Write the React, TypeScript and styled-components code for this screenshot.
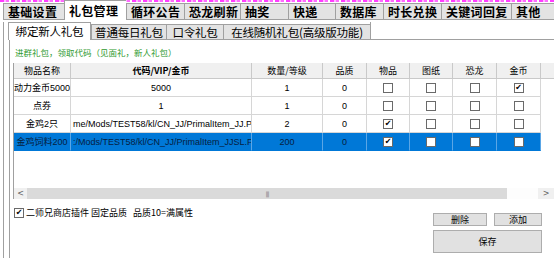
import React from 'react';
import styled, { createGlobalStyle } from 'styled-components';

const GlobalStyle = createGlobalStyle`
  html, body {
    margin: 0;
    padding: 0;
    background: #fff;
  }
  body {
    font-family: "Noto Sans CJK SC", "Microsoft YaHei", sans-serif;
    color: #000;
  }
`;

const Window = styled.div`
  width: 554px;
  height: 258px;
  overflow: hidden;
  background: #fff;
`;

const MainTabRow = styled.div`
  display: flex;
  align-items: flex-start;
  height: 20px;
  padding-left: 3px;
  background-image: repeating-linear-gradient(90deg, #ff3cff 0 4px, #ffb8ff 4px 6px, #ff6aff 6px 9px, #fff 9px 11px);
  background-size: 100% 2px;
  background-repeat: no-repeat;
`;

const MainTab = styled.div<{ $w: number; $active?: boolean }>`
  flex: none;
  box-sizing: border-box;
  width: ${p => p.$w}px;
  height: ${p => (p.$active ? 20 : 17)}px;
  margin-top: ${p => (p.$active ? 0 : 3)}px;
  padding-left: 4px;
  border: 1px solid #a0a0a0;
  border-right: none;
  border-bottom: ${p => (p.$active ? 'none' : '1px solid #a0a0a0')};
  background: ${p => (p.$active ? '#fff' : '#e3e3e3')};
  font-size: 12px;
  font-weight: 700;
  letter-spacing: 0.3px;
  line-height: ${p => (p.$active ? 19 : 15)}px;
  white-space: nowrap;
  overflow: hidden;
`;

const MainPanel = styled.div`
  height: 238px;
  margin-left: 3px;
  border-left: 1px solid #a0a0a0;
  padding-left: 5px;
`;

const SubTabRow = styled.div`
  display: flex;
  align-items: flex-start;
  height: 18px;
  margin-top: 2px;
  margin-left: -1px;
`;

const SubTab = styled.div<{ $w: number; $active?: boolean }>`
  flex: none;
  box-sizing: border-box;
  width: ${p => p.$w}px;
  height: ${p => (p.$active ? 18 : 16)}px;
  margin-top: ${p => (p.$active ? 0 : 2)}px;
  border: 1px solid #a0a0a0;
  border-right: ${p => (p.$active ? '1px solid #a0a0a0' : 'none')};
  border-bottom: ${p => (p.$active ? 'none' : '1px solid #a0a0a0')};
  background: ${p => (p.$active ? '#fff' : '#e3e3e3')};
  font-size: 11.5px;
  line-height: ${p => (p.$active ? 17 : 14)}px;
  text-align: center;
  white-space: nowrap;
  overflow: hidden;
  letter-spacing: -0.2px;
`;

const SubTabFill = styled.div`
  flex: 1;
  height: 18px;
  box-sizing: border-box;
  border-left: 1px solid #a0a0a0;
  border-bottom: 1px solid #a0a0a0;
`;

const SubPanel = styled.div`
  height: 218px;
  border-left: 1px solid #a0a0a0;
  padding-left: 4px;
  display: flex;
  flex-direction: column;
`;

const Hint = styled.div`
  margin: 7px 0 0 1px;
  height: 11px;
  font-size: 8.5px;
  line-height: 11px;
  color: #2f9a2f;
  white-space: nowrap;
`;

const Table = styled.div`
  margin-top: 5px;
  margin-left: -1px;
  border-left: 1px solid #a0a0a0;
  width: 560px;
`;

const GridBody = styled.div`
  height: 125px;
  background: #fff;
`;

const COLS = '57px 181px 71px 44px 43px 43px 44px 44px 1fr';

const HeaderRow = styled.div`
  display: grid;
  grid-template-columns: ${COLS};
  height: 16px;
  background: #f0f0f0;
`;

const HeaderCell = styled.div<{ $bold?: boolean }>`
  box-sizing: border-box;
  border-right: 1px solid #c9c9c9;
  border-bottom: 1px solid #c9c9c9;
  font-size: 9px;
  font-weight: ${p => (p.$bold ? 700 : 400)};
  line-height: 15px;
  text-align: center;
  white-space: nowrap;
  overflow: hidden;
`;

const Row = styled.div<{ $selected?: boolean }>`
  display: grid;
  grid-template-columns: ${COLS};
  height: 18px;
  color: ${p => (p.$selected ? '#06203f' : '#000')};
  & > div:not(:last-child) {
    background: ${p => (p.$selected ? '#0078d7' : '#fff')};
    border-right: 1px solid ${p => (p.$selected ? '#5aa6e6' : '#d6d6d6')};
    border-bottom: 1px solid ${p => (p.$selected ? '#0078d7' : '#d6d6d6')};
  }
`;

const Cell = styled.div<{ $left?: boolean }>`
  box-sizing: border-box;
  display: flex;
  align-items: center;
  justify-content: ${p => (p.$left ? 'flex-start' : 'center')};
  padding-left: ${p => (p.$left ? 2 : 0)}px;
  font-family: "Liberation Sans", "Noto Sans CJK SC", sans-serif;
  font-size: 9px;
  white-space: nowrap;
  overflow: hidden;
`;

const Filler = styled.div``;

const Box = styled.span<{ $checked?: boolean }>`
  box-sizing: border-box;
  flex: none;
  width: 10px;
  height: 10px;
  border: 1px solid #6a6a6a;
  background: #fff;
  display: flex;
  align-items: center;
  justify-content: center;
  font-family: "DejaVu Sans", sans-serif;
  font-size: 8px;
  line-height: 1;
  color: #000;
`;

const HScroll = styled.div`
  display: flex;
  height: 11px;
  background: #f0f0f0;
  font-family: "DejaVu Sans", sans-serif;
`;

const ScrollButton = styled.div<{ $w: number }>`
  width: ${p => p.$w}px;
  flex: none;
  display: flex;
  align-items: center;
  justify-content: center;
  font-size: 8px;
  color: #606060;
  background: #f0f0f0;
`;

const Thumb = styled.div`
  width: 480px;
  flex: none;
  background: #dadada;
  display: flex;
  align-items: center;
  justify-content: center;
  font-size: 6px;
  color: #7a7a7a;
  letter-spacing: -1px;
`;

const Track = styled.div`
  width: 31px;
  flex: none;
  background: #fdfdfd;
`;

const Bottom = styled.div`
  display: flex;
  justify-content: space-between;
  padding-right: 12px;
`;

const CheckLine = styled.label`
  display: flex;
  align-items: center;
  gap: 2px;
  margin-top: 8px;
  height: 11px;
  font-size: 9px;
  white-space: pre;
`;

const ButtonColumn = styled.div`
  display: flex;
  flex-direction: column;
  gap: 4px;
  margin-top: 14px;
`;

const ButtonRow = styled.div`
  display: flex;
  gap: 7px;
`;

const Button = styled.div<{ $w: number; $h: number }>`
  box-sizing: border-box;
  width: ${p => p.$w}px;
  height: ${p => p.$h}px;
  border: 1px solid #adadad;
  background: #e1e1e1;
  display: flex;
  align-items: center;
  justify-content: center;
  font-size: 9px;
`;

const mainTabs = [
  { t: '基础设置', w: 61 },
  { t: '礼包管理', w: 62, active: true },
  { t: '循环公告', w: 58 },
  { t: '恐龙刷新', w: 56 },
  { t: '抽奖', w: 48 },
  { t: '快递', w: 47 },
  { t: '数据库', w: 48 },
  { t: '时长兑换', w: 58 },
  { t: '关键词回复', w: 70 },
  { t: '其他', w: 50 },
];

const subTabs = [
  { t: '绑定新人礼包', w: 83, active: true },
  { t: '普通每日礼包', w: 75 },
  { t: '口令礼包', w: 57 },
  { t: '在线随机礼包(高级版功能)', w: 147 },
];

const headers = ['物品名称', '代码/VIP/金币', '数量/等级', '品质', '物品', '图纸', '恐龙', '金币'];

interface Gift {
  name: string;
  code: string;
  qty: string;
  quality: string;
  flags: boolean[];
  selected?: boolean;
}

const gifts: Gift[] = [
  { name: '动力金币5000', code: '5000', qty: '1', quality: '0', flags: [false, false, false, true] },
  { name: '点券', code: '1', qty: '1', quality: '0', flags: [false, false, false, false] },
  { name: '金鸡2只', code: 'me/Mods/TEST58/kl/CN_JJ/PrimalItem_JJ.P', qty: '2', quality: '0', flags: [true, false, false, false] },
  { name: '金鸡饲料200', code: ':/Mods/TEST58/kl/CN_JJ/PrimalItem_JJSL.P', qty: '200', quality: '0', flags: [true, false, false, false], selected: true },
];

const Check: React.FC<{ checked?: boolean }> = ({ checked }) => (
  <Box $checked={checked}>{checked ? '✔' : ''}</Box>
);

export default function App() {
  return (
    <Window>
      <GlobalStyle />
      <MainTabRow>
        {mainTabs.map(tab => (
          <MainTab key={tab.t} $w={tab.w} $active={tab.active}>{tab.t}</MainTab>
        ))}
      </MainTabRow>
      <MainPanel>
        <SubTabRow>
          {subTabs.map(tab => (
            <SubTab key={tab.t} $w={tab.w} $active={tab.active}>{tab.t}</SubTab>
          ))}
          <SubTabFill />
        </SubTabRow>
        <SubPanel>
          <Hint>进群礼包，领取代码（见面礼，新人礼包）</Hint>
          <Table>
            <GridBody>
              <HeaderRow>
                {headers.map(h => (
                  <HeaderCell key={h} $bold={h === '代码/VIP/金币'}>{h}</HeaderCell>
                ))}
                <HeaderCell />
              </HeaderRow>
              {gifts.map(g => (
                <Row key={g.name} $selected={g.selected}>
                  <Cell>{g.name}</Cell>
                  <Cell $left={g.code.length > 10}>{g.code}</Cell>
                  <Cell>{g.qty}</Cell>
                  <Cell>{g.quality}</Cell>
                  {g.flags.map((f, i) => (
                    <Cell key={i}><Check checked={f} /></Cell>
                  ))}
                  <Filler />
                </Row>
              ))}
            </GridBody>
            <HScroll>
              <ScrollButton $w={13}>&lt;</ScrollButton>
              <Thumb>|||</Thumb>
              <Track />
              <ScrollButton $w={16}>&gt;</ScrollButton>
            </HScroll>
          </Table>
          <Bottom>
            <CheckLine>
              <Check checked />
              {'二师兄商店插件 固定品质   品质10=满属性'}
            </CheckLine>
            <ButtonColumn>
              <ButtonRow>
                <Button $w={54} $h={13}>删除</Button>
                <Button $w={48} $h={13}>添加</Button>
              </ButtonRow>
              <Button $w={109} $h={23}>保存</Button>
            </ButtonColumn>
          </Bottom>
        </SubPanel>
      </MainPanel>
    </Window>
  );
}
